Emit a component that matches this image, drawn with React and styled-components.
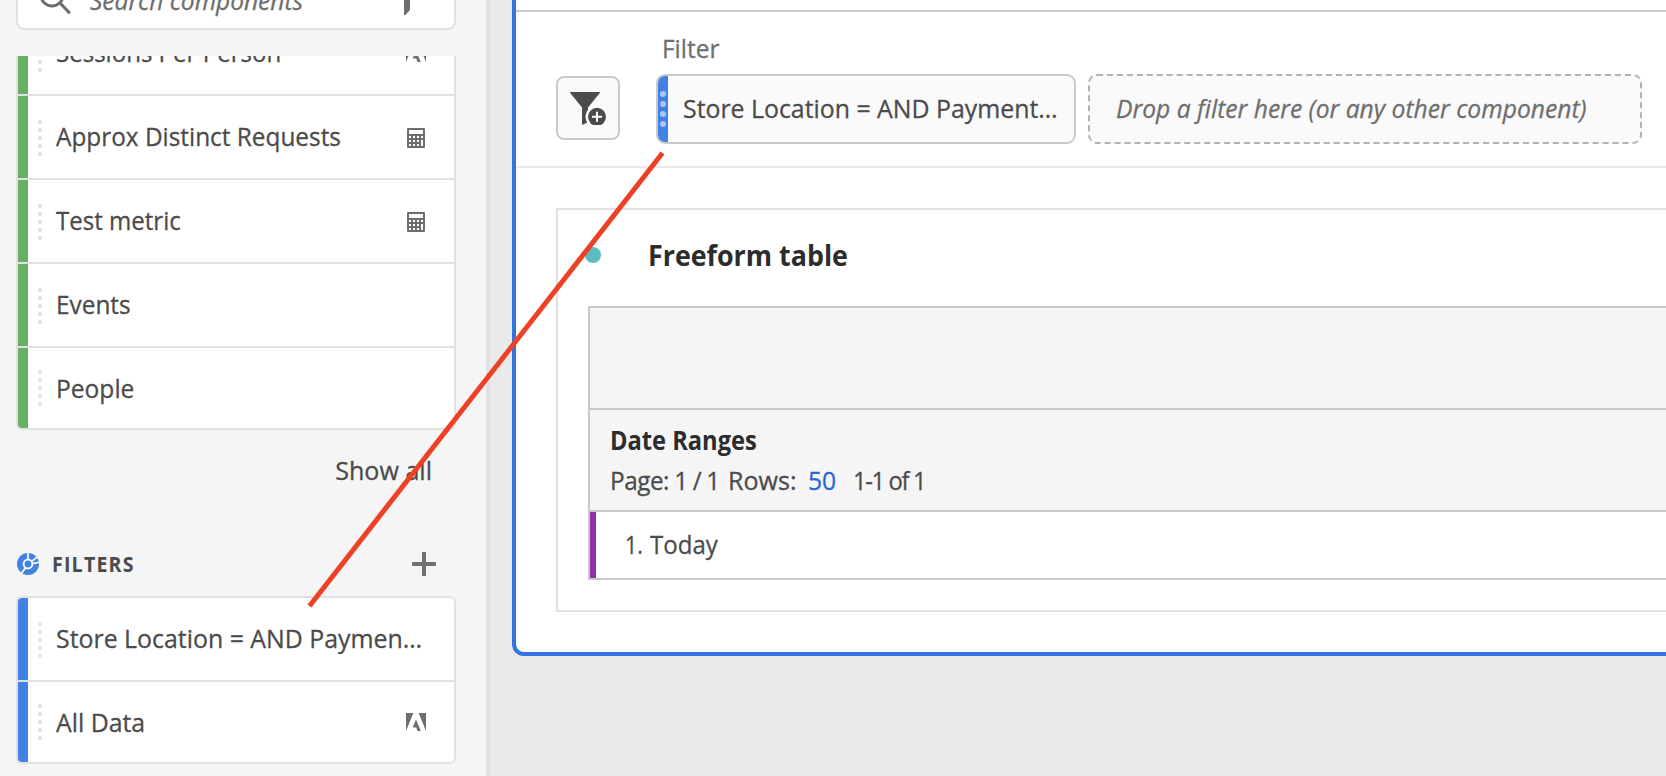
import React from 'react';
import styled, { createGlobalStyle, css } from 'styled-components';

const GlobalStyle = createGlobalStyle`
  *, *::before, *::after { box-sizing: border-box; }
  body {
    margin: 0;
    overflow: hidden;
    font-family: 'Open Sans', 'Noto Sans', sans-serif;
    font-size: 26px;
    color: #4b4b4b;
  }
  svg { display: block; }
`;

/* Slightly narrowed, slightly sturdier letterforms used by all labels. */
const narrow = (scale, origin = 'left') => css`
  transform: scaleX(${p => p.$scale || scale});
  transform-origin: ${origin} center;
  -webkit-text-stroke: 0.3px currentColor;
`;

const Page = styled.div`
  position: relative;
  display: flex;
  width: 1666px;
  height: 776px;
  overflow: hidden;
  background: #eaeaea;
`;

const Sidebar = styled.aside`
  display: flex;
  flex-direction: column;
  flex: none;
  width: 490px;
  height: 776px;
  padding: 0 30px 0 16px;
  background: #f5f5f5;
  border-right: 4px solid #e1e1e1;
`;

const SearchBox = styled.div`
  display: flex;
  flex: none;
  align-items: flex-end;
  width: 440px;
  height: 30px;
  margin-bottom: 26px;
  padding-left: 22px;
  background: #fff;
  border: solid #e1e1e1;
  border-width: 0 2px 2px;
  border-radius: 0 0 8px 8px;
  overflow: hidden;
`;

const SearchText = styled.span`
  flex: 1;
  margin: 0 0 8px 16px;
  line-height: 40px;
  font-style: italic;
  color: #6e6e6e;
  white-space: nowrap;
  ${narrow(0.943)}
`;

const SearchFilter = styled.svg`
  flex: none;
  margin-right: 44px;
`;

const MetricViewport = styled.div`
  display: flex;
  flex: none;
  flex-direction: column;
  justify-content: flex-end;
  width: 440px;
  height: 374px;
  overflow: hidden;
`;

const ComponentList = styled.ul`
  flex: none;
  width: 440px;
  margin: 0;
  padding: 0;
  list-style: none;
  background: #fff;
  border: 2px solid #e1e1e1;
  border-radius: 6px;
  overflow: hidden;
`;

const ComponentRow = styled.li`
  display: flex;
  height: 84px;
  border-bottom: 2px solid #e1e1e1;

  &:last-child {
    height: 80px;
    border-bottom: 0;
  }
`;

const ColorTab = styled.span`
  flex: none;
  width: 10px;
  background: ${p => (p.$kind === 'filter' ? '#4181e3' : '#67b262')};
`;

const Grip = styled.span`
  display: flex;
  flex: none;
  flex-direction: column;
  justify-content: center;
  gap: 4px;
  width: 28px;
  height: 84px;
  padding-left: 10px;

  ${ComponentRow}:last-child & { height: 80px; }
`;

const GripDot = styled.i`
  flex: none;
  width: ${p => p.$size}px;
  height: ${p => p.$size}px;
  border-radius: 50%;
  background: ${p => p.$color};
`;

const RowLabel = styled.span`
  flex: 1;
  line-height: 80px;
  white-space: nowrap;
  ${narrow(0.937)}
`;

const RowIcon = styled.svg`
  flex: none;
  margin: 32px ${p => p.$right}px 0 0;

  ${ComponentRow}:last-child & { margin-top: 31px; }
`;

const ShowAll = styled.div`
  flex: none;
  height: 111px;
  margin-right: 24px;
  padding-top: 16px;
  line-height: 48px;
  text-align: right;
  ${narrow(0.965, 'right')}
`;

const SectionHeader = styled.header`
  display: flex;
  flex: none;
  align-items: center;
  width: 440px;
  height: 46px;
  margin-bottom: 9px;
  padding: 0 20px 0 1px;
`;

const SectionTitle = styled.h2`
  flex: 1;
  margin: 0 0 0 13px;
  font-size: 21px;
  font-weight: 700;
  letter-spacing: 1.25px;
  line-height: 46px;
  transform: scaleX(0.935);
  transform-origin: left center;
`;

const Workspace = styled.main`
  flex: none;
  width: 1176px;
  padding-left: 22px;
`;

const Panel = styled.section`
  display: flex;
  flex-direction: column;
  width: 1180px;
  height: 656px;
  background: #fff;
  border: solid #3273df;
  border-width: 0 0 4px 4px;
  border-bottom-left-radius: 12px;
`;

const PanelTop = styled.div`
  flex: none;
  height: 12px;
  border-bottom: 2px solid #c9c9c9;
`;

const FilterBar = styled.div`
  display: flex;
  flex: none;
  height: 156px;
  padding-left: 40px;
  border-bottom: 2px solid #e8e8e8;
`;

const AddFilterButton = styled.button`
  display: flex;
  align-items: center;
  justify-content: center;
  width: 64px;
  height: 64px;
  margin: 64px 36px 0 0;
  padding: 0;
  background: #fafafa;
  border: 2px solid #cacaca;
  border-radius: 8px;
`;

const FilterGroup = styled.div`
  padding-top: 12px;
`;

const FilterLabel = styled.div`
  height: 50px;
  margin-left: 6px;
  line-height: 48px;
  color: #6e6e6e;
  ${narrow(0.94)}
`;

const FilterRow = styled.div`
  display: flex;
  gap: 12px;
`;

const FilterChip = styled.div`
  display: flex;
  width: 420px;
  height: 70px;
  background: #fafafa;
  border: 2px solid #cacaca;
  border-radius: 9px;
  overflow: hidden;
`;

const ChipTab = styled.span`
  display: flex;
  flex: none;
  flex-direction: column;
  align-items: center;
  justify-content: center;
  gap: 4px;
  width: 10px;
  background: #4181e3;
`;

const ChipText = styled.span`
  margin-left: 15px;
  line-height: 64px;
  white-space: nowrap;
  ${narrow(0.956)}
`;

const DropZone = styled.div`
  width: 554px;
  height: 70px;
  padding-left: 26px;
  background: #fafafa;
  border: 2px dashed #b3b3b3;
  border-radius: 9px;
`;

const DropHint = styled.div`
  font-style: italic;
  line-height: 64px;
  color: #6e6e6e;
  white-space: nowrap;
  ${narrow(0.948)}
`;

const Card = styled.article`
  flex: none;
  width: 1140px;
  height: 404px;
  margin: 40px 0 0 40px;
  border: 2px solid #e1e1e1;
`;

const CardHeader = styled.header`
  display: flex;
  align-items: center;
  height: 96px;
  padding: 0 0 6px 27px;
`;

const StatusDot = styled.i`
  width: 16px;
  height: 16px;
  border-radius: 50%;
  background: #5bbcc4;
`;

const CardTitle = styled.h1`
  margin: 0 0 2px 47px;
  font-size: 29px;
  font-weight: 700;
  color: #2c2c2c;
  transform: scaleX(0.925);
  transform-origin: left center;
`;

const Table = styled.div`
  width: 1110px;
  margin-left: 30px;
  border: 2px solid #c9c9c9;
`;

const TableHead = styled.div`
  height: 102px;
  background: #f5f5f5;
  border-bottom: 2px solid #c9c9c9;
`;

const TableMeta = styled(TableHead)`
  padding: 10px 0 0 20px;
`;

const MetaTitle = styled.div`
  height: 40px;
  line-height: 41px;
  font-weight: 700;
  color: #2c2c2c;
  transform: scaleX(0.91);
  transform-origin: left center;
`;

const MetaLine = styled.div`
  display: flex;
  line-height: 40px;
  white-space: pre;
`;

const PageCount = styled.span`
  width: 118px;
  letter-spacing: -0.5px;
  word-spacing: -0.8px;
  ${narrow(0.935)}
`;

const RowsLabel = styled.span`
  width: 80px;
  ${narrow(0.965)}
`;

const RowsValue = styled.a`
  width: 45px;
  color: #2767cf;
  ${narrow(0.95)}
`;

const RowsRange = styled.span`
  letter-spacing: -1.5px;
  ${narrow(0.915)}
`;

const TableRow = styled.div`
  display: flex;
  height: 66px;
  line-height: 64px;
  background: #fff;
`;

const RowTab = styled.span`
  flex: none;
  width: 6px;
  background: #9431a8;
`;

const RowNumber = styled.span`
  width: 25px;
  margin-left: 29px;
  ${narrow(0.82)}
`;

const RowValue = styled.span`
  ${narrow(0.925)}
`;

const Annotation = styled.svg`
  position: absolute;
  inset: 0;
  pointer-events: none;
`;

function CalculatorIcon() {
  return (
    <RowIcon $right={29} width="18" height="20" viewBox="0 0 18 20" fill="#6e6e6e">
      <path
        fillRule="evenodd"
        d="M1 0h16a1 1 0 0 1 1 1v18a1 1 0 0 1-1 1H1a1 1 0 0 1-1-1V1a1 1 0 0 1 1-1zM2 2v4h14V2zM2 8v2h2V8zM6 8v2h2V8zM10 8v2h2V8zM14 8v2h2V8zM2 12v2h2v-2zM6 12v2h2v-2zM10 12v2h2v-2zM14 12v6h2v-6zM2 16v2h2v-2zM6 16v2h2v-2zM10 16v2h2v-2z"
      />
    </RowIcon>
  );
}

function AdobeIcon() {
  return (
    <RowIcon $right={28} width="20" height="18" viewBox="0 0 20 18" fill="#6e6e6e">
      <path d="M0 0h7.4L0 18zM12.6 0H20v18zM10 6.6 14.8 18h-3.2l-1.4-3.6H6.7z" />
    </RowIcon>
  );
}

function SegmentIcon() {
  return (
    <svg width="22" height="22" viewBox="0 0 22 22">
      <circle cx="11" cy="11" r="11" fill="#4181e3" />
      <circle cx="11" cy="11" r="4.4" fill="none" stroke="#f5f5f5" strokeWidth="2" />
      <path d="M11 6.6V0M14.6 8.4 21 3.4M15.4 10.6 22 9.4M8.6 14.6 4.4 20.4" stroke="#f5f5f5" strokeWidth="1.8" />
    </svg>
  );
}

function AddFilterIcon() {
  return (
    <svg width="36" height="34" viewBox="0 0 36 34">
      <path d="M.6 1h28.8c.6 0 .8.6.4 1.1L18 16.5V31l-4.6 2.6c-.6.3-1.4 0-1.4-.6V16.5L.2 2.1C-.2 1.6 0 1 .6 1z" fill="#4b4b4b" />
      <circle cx="27" cy="25.8" r="11.4" fill="#fafafa" />
      <circle cx="27" cy="25.8" r="9" fill="#4b4b4b" />
      <path d="M27 20.8v10M22 25.8h10" stroke="#fff" strokeWidth="2" />
    </svg>
  );
}

const ICONS = { calculator: CalculatorIcon, adobe: AdobeIcon };

function Dots({ count, size, color }) {
  return Array.from({ length: count }, (_, i) => <GripDot key={i} $size={size} $color={color} />);
}

function ComponentItem({ kind, label, icon, scale }) {
  const Icon = ICONS[icon];
  return (
    <ComponentRow>
      <ColorTab $kind={kind} />
      <Grip><Dots count={5} size={4} color="#e1e1e1" /></Grip>
      <RowLabel $scale={scale}>{label}</RowLabel>
      {Icon && <Icon />}
    </ComponentRow>
  );
}

const METRICS = [
  { label: 'Sessions Per Person', icon: 'adobe', scale: 0.925 },
  { label: 'Approx Distinct Requests', icon: 'calculator' },
  { label: 'Test metric', icon: 'calculator', scale: 0.925 },
  { label: 'Events' },
  { label: 'People', scale: 0.945 },
];

const FILTERS = [
  { label: 'Store Location = AND Paymen…', scale: 0.957 },
  { label: 'All Data', icon: 'adobe', scale: 0.955 },
];

export default function App() {
  return (
    <>
      <GlobalStyle />
      <Page>
        <Sidebar>
          <SearchBox>
            <svg width="34" height="28" viewBox="0 0 34 28" fill="none" stroke="#6e6e6e" strokeWidth="3">
              <circle cx="12" cy="-5" r="11" />
              <path d="M20 3 29 12.4" strokeLinecap="round" />
            </svg>
            <SearchText>Search components</SearchText>
            <SearchFilter width="6" height="28" viewBox="0 0 6 28">
              <path d="M0 0h6v10l-4.6 5H0z" fill="#6e6e6e" />
            </SearchFilter>
          </SearchBox>

          <MetricViewport>
            <ComponentList>
              {METRICS.map(m => <ComponentItem key={m.label} kind="metric" {...m} />)}
            </ComponentList>
          </MetricViewport>
          <ShowAll>Show all</ShowAll>

          <SectionHeader>
            <SegmentIcon />
            <SectionTitle>FILTERS</SectionTitle>
            <svg width="24" height="24" viewBox="0 0 24 24" fill="#6e6e6e">
              <rect x="10" width="4" height="24" rx="1" />
              <rect y="10" width="24" height="4" rx="1" />
            </svg>
          </SectionHeader>
          <ComponentList>
            {FILTERS.map(f => <ComponentItem key={f.label} kind="filter" {...f} />)}
          </ComponentList>
        </Sidebar>

        <Workspace>
          <Panel>
            <PanelTop />
            <FilterBar>
              <AddFilterButton aria-label="Add filter"><AddFilterIcon /></AddFilterButton>
              <FilterGroup>
                <FilterLabel>Filter</FilterLabel>
                <FilterRow>
                  <FilterChip>
                    <ChipTab><Dots count={4} size={6} color="#a9c6f3" /></ChipTab>
                    <ChipText>Store Location = AND Payment…</ChipText>
                  </FilterChip>
                  <DropZone>
                    <DropHint>Drop a filter here (or any other component)</DropHint>
                  </DropZone>
                </FilterRow>
              </FilterGroup>
            </FilterBar>

            <Card>
              <CardHeader>
                <StatusDot />
                <CardTitle>Freeform table</CardTitle>
              </CardHeader>
              <Table>
                <TableHead />
                <TableMeta>
                  <MetaTitle>Date Ranges</MetaTitle>
                  <MetaLine>
                    <PageCount>Page: 1 / 1</PageCount>
                    <RowsLabel>Rows:</RowsLabel>
                    <RowsValue>50</RowsValue>
                    <RowsRange>1-1 of 1</RowsRange>
                  </MetaLine>
                </TableMeta>
                <TableRow>
                  <RowTab />
                  <RowNumber>1.</RowNumber>
                  <RowValue>Today</RowValue>
                </TableRow>
              </Table>
            </Card>
          </Panel>
        </Workspace>

        <Annotation width="1666" height="776" viewBox="0 0 1666 776">
          <path d="M309.5 606 662.5 153" stroke="#ed4025" strokeWidth="5" />
        </Annotation>
      </Page>
    </>
  );
}
